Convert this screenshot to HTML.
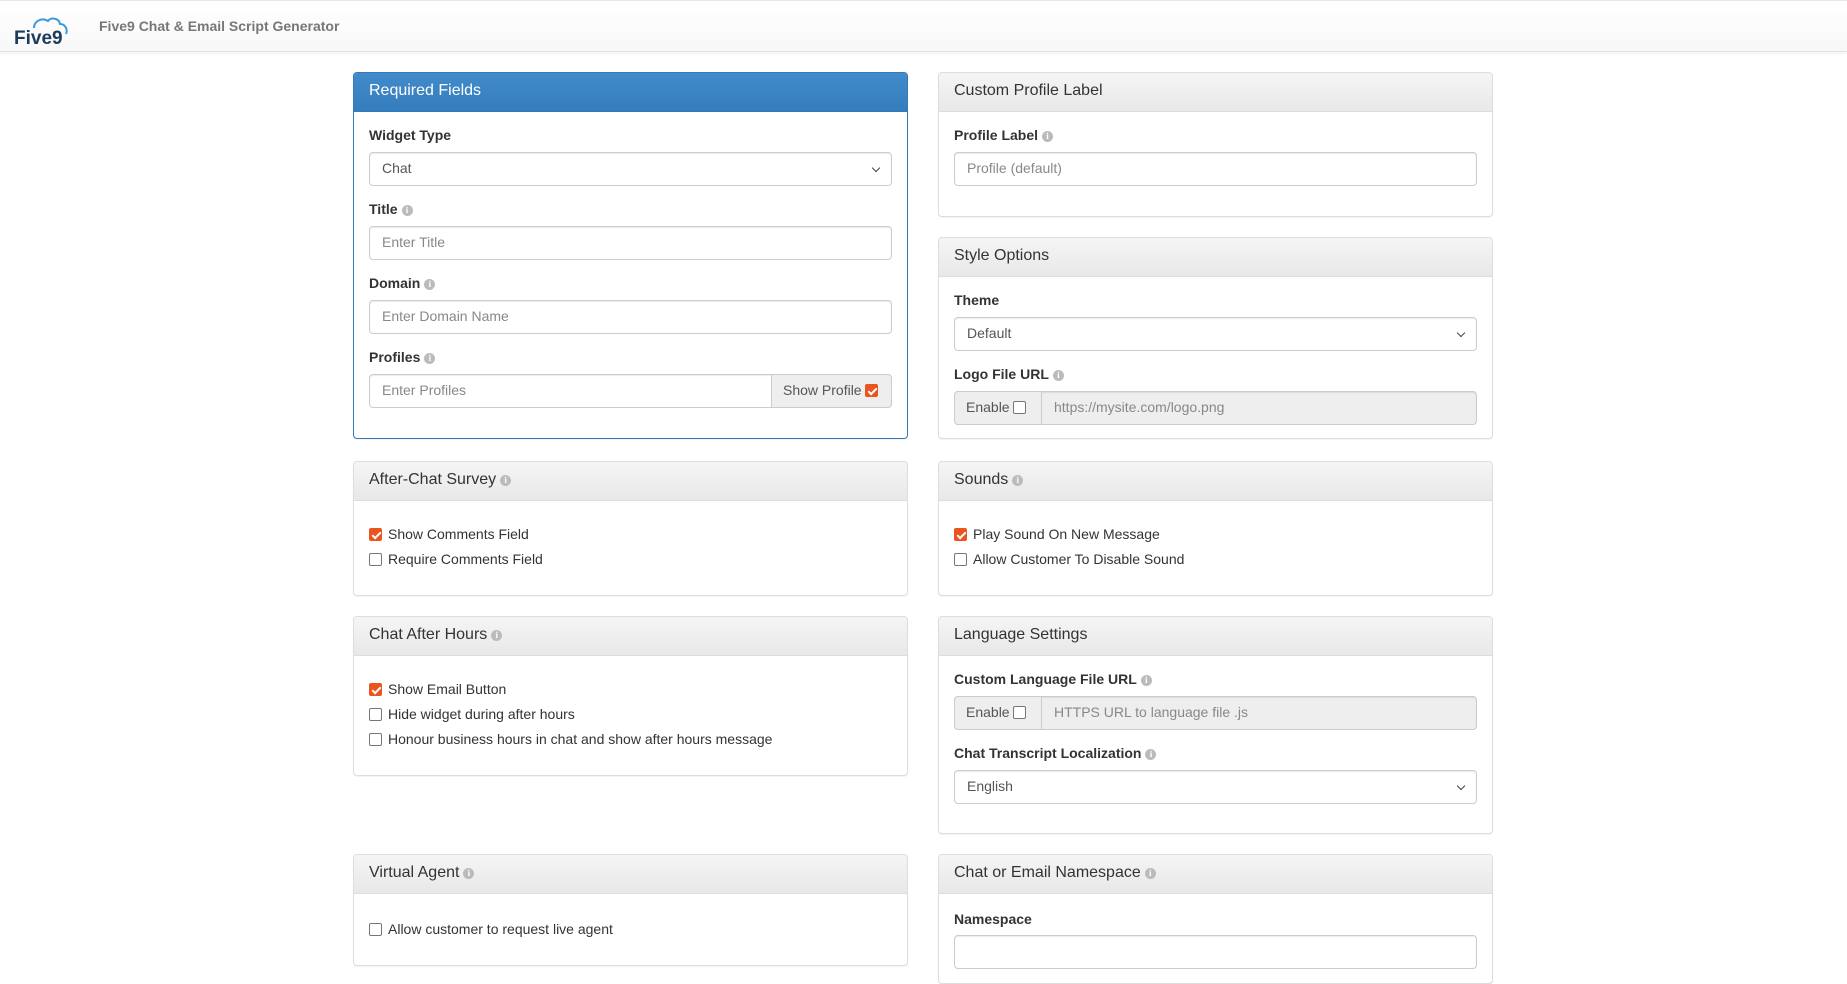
<!DOCTYPE html>
<html><head><meta charset="utf-8"><style>
*{box-sizing:border-box;margin:0;padding:0}
body{width:1847px;height:968px;overflow:hidden;background:#fff;font-family:"Liberation Sans",Arial,sans-serif;font-size:14px;color:#333;position:relative}
.hdr{position:absolute;left:0;top:0;width:1847px;height:52px;background:linear-gradient(#fff,#f8f8f8);border-bottom:1px solid #e2e2e2;box-shadow:0 1px 4px rgba(0,0,0,.08);border-top:1px solid #e6e6e6}
.hdr .t{position:absolute;left:99px;top:17px;font-size:14px;font-weight:bold;color:#777}
.p{position:absolute;border:1px solid #ddd;border-radius:4px;background:#fff;box-shadow:0 1px 1px rgba(0,0,0,.05);width:555px}
.p .h{height:39px;background:linear-gradient(#f5f5f5,#e8e8e8);border-bottom:1px solid #ddd;padding:9px 15px;font-size:16px;color:#333;border-radius:3px 3px 0 0}
.p.blue{border-color:#337ab7}
.p.blue .h{background:linear-gradient(#428bca,#357ebd);color:#fff;border-color:#337ab7}
.l{position:absolute;font-weight:bold;font-size:14px;color:#333}
.i{display:inline-block;width:11px;height:11px;border-radius:50%;background:#bbb;color:#fff;font-size:9px;line-height:11px;text-align:center;font-weight:bold;vertical-align:1px;margin-left:4px;font-family:"Liberation Serif",serif}
.in{position:absolute;height:34px;border:1px solid #ccc;border-radius:4px;padding:7px 12px;color:#888;font-size:14px;background:#fff;box-shadow:inset 0 1px 1px rgba(0,0,0,.075)}
.sel{color:#555}
.sel:after{content:"";position:absolute;right:12px;top:12px;width:5px;height:5px;border-right:1.5px solid #444;border-bottom:1.5px solid #444;transform:rotate(45deg)}
.dis{background:#eee}
.add{position:absolute;top:-1px;height:34px;background:#eee;border:1px solid #ccc;padding:7px 11px;color:#555}
.cb{display:inline-block;width:13px;height:13px;border:1px solid #767676;border-radius:2px;background:#fff;vertical-align:-2px;position:relative}
.cb.on{background:#e9541f;border-color:#e9541f}
.cb.on:after{content:"";position:absolute;left:3.5px;top:0.5px;width:3px;height:7px;border-right:2px solid #fff;border-bottom:2px solid #fff;transform:rotate(45deg)}
.c{position:absolute;color:#333;font-size:14px}
.c .cb{margin-right:6px}
</style></head><body>
<div class="hdr">
<svg style="position:absolute;left:12px;top:14px" width="60" height="32" viewBox="0 0 60 32">
<path d="M22 13 C22 6 30 2 36 6 C39 2 47 3 48 9 C53 9 56 14 54 19" fill="none" stroke="#3a9ad9" stroke-width="2"/>
<text x="2" y="29" font-family="Liberation Sans,sans-serif" font-size="19" font-weight="bold" fill="#1b3d5c">Five9</text>
</svg>
<div class="t">Five9 Chat &amp; Email Script Generator</div>
</div>

<div class="p blue" style="left:353px;top:72px;height:367px">
<div class="h">Required Fields</div>
<div class="l" style="left:15px;top:54px">Widget Type</div>
<div class="in sel" style="left:15px;top:79px;width:523px">Chat</div>
<div class="l" style="left:15px;top:128px">Title<span class="i">i</span></div>
<div class="in" style="left:15px;top:153px;width:523px">Enter Title</div>
<div class="l" style="left:15px;top:202px">Domain<span class="i">i</span></div>
<div class="in" style="left:15px;top:227px;width:523px">Enter Domain Name</div>
<div class="l" style="left:15px;top:276px">Profiles<span class="i">i</span></div>
<div class="in" style="left:15px;top:301px;width:523px">Enter Profiles<div class="add" style="right:-1px;border-radius:0 4px 4px 0;width:121px">Show Profile <span class="cb on"></span></div></div>
</div>

<div class="p" style="left:353px;top:461px;height:135px">
<div class="h">After-Chat Survey<span class="i">i</span></div>
<div class="c" style="left:15px;top:64px"><span class="cb on"></span>Show Comments Field</div>
<div class="c" style="left:15px;top:89px"><span class="cb"></span>Require Comments Field</div>
</div>

<div class="p" style="left:353px;top:616px;height:160px">
<div class="h">Chat After Hours<span class="i">i</span></div>
<div class="c" style="left:15px;top:64px"><span class="cb on"></span>Show Email Button</div>
<div class="c" style="left:15px;top:89px"><span class="cb"></span>Hide widget during after hours</div>
<div class="c" style="left:15px;top:114px"><span class="cb"></span>Honour business hours in chat and show after hours message</div>
</div>

<div class="p" style="left:353px;top:854px;height:112px">
<div class="h">Virtual Agent<span class="i">i</span></div>
<div class="c" style="left:15px;top:66px"><span class="cb"></span>Allow customer to request live agent</div>
</div>

<div class="p" style="left:938px;top:72px;height:145px">
<div class="h">Custom Profile Label</div>
<div class="l" style="left:15px;top:54px">Profile Label<span class="i">i</span></div>
<div class="in" style="left:15px;top:79px;width:523px">Profile (default)</div>
</div>

<div class="p" style="left:938px;top:237px;height:202px">
<div class="h">Style Options</div>
<div class="l" style="left:15px;top:54px">Theme</div>
<div class="in sel" style="left:15px;top:79px;width:523px">Default</div>
<div class="l" style="left:15px;top:128px">Logo File URL<span class="i">i</span></div>
<div class="in dis" style="left:15px;top:153px;width:523px;padding-left:99px">https://mysite.com/logo.png<div class="add" style="left:-1px;border-radius:4px 0 0 4px;width:88px">Enable <span class="cb"></span></div></div>
</div>

<div class="p" style="left:938px;top:461px;height:135px">
<div class="h">Sounds<span class="i">i</span></div>
<div class="c" style="left:15px;top:64px"><span class="cb on"></span>Play Sound On New Message</div>
<div class="c" style="left:15px;top:89px"><span class="cb"></span>Allow Customer To Disable Sound</div>
</div>

<div class="p" style="left:938px;top:616px;height:218px">
<div class="h">Language Settings</div>
<div class="l" style="left:15px;top:54px">Custom Language File URL<span class="i">i</span></div>
<div class="in dis" style="left:15px;top:79px;width:523px;padding-left:99px">HTTPS URL to language file .js<div class="add" style="left:-1px;border-radius:4px 0 0 4px;width:88px">Enable <span class="cb"></span></div></div>
<div class="l" style="left:15px;top:128px">Chat Transcript Localization<span class="i">i</span></div>
<div class="in sel" style="left:15px;top:153px;width:523px">English</div>
</div>

<div class="p" style="left:938px;top:854px;height:130px">
<div class="h">Chat or Email Namespace<span class="i">i</span></div>
<div class="l" style="left:15px;top:56px">Namespace</div>
<div class="in" style="left:15px;top:80px;width:523px"></div>
</div>
</body></html>
